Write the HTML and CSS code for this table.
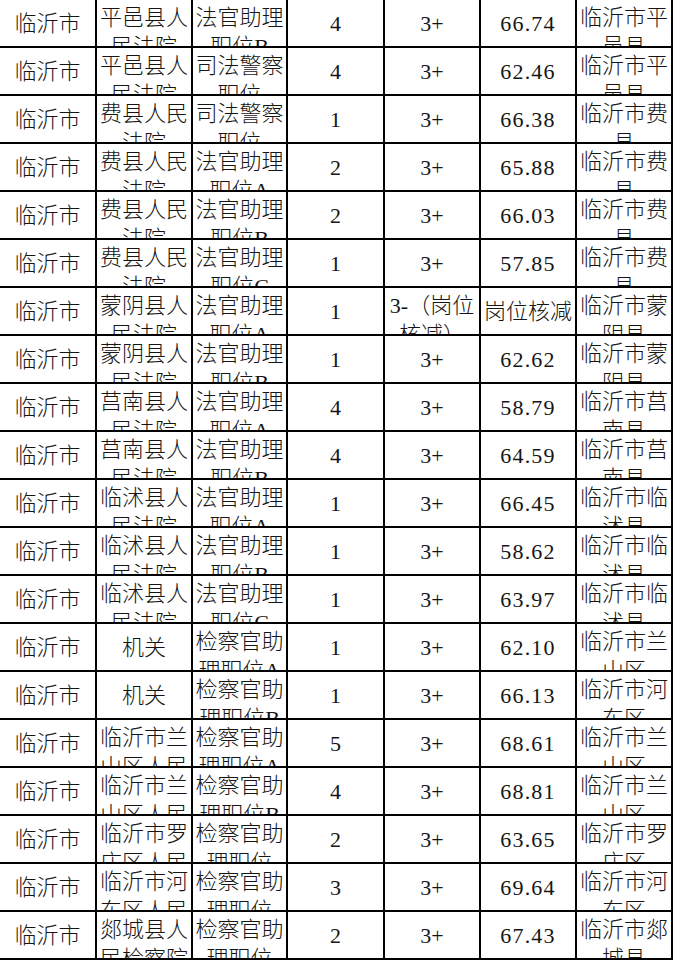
FILE: index.html
```html
<!DOCTYPE html>
<html lang="zh-CN">
<head>
<meta charset="utf-8">
<title>临沂市</title>
<link rel="stylesheet" href="styles.css">
</head>
<body>
<table class="sheet">
<colgroup>
<col class="w1"><col class="w2"><col class="w3"><col class="w4"><col class="w5"><col class="w6"><col class="w7">
</colgroup>
<tbody id="rows">
<tr><td><div class="c">临沂市</div></td><td><div class="t">平邑县人民法院</div></td><td><div class="t">法官助理职位B</div></td><td><div class="c num">4</div></td><td><div class="c num">3+</div></td><td><div class="c num score">66.74</div></td><td><div class="t">临沂市平邑县</div></td></tr>
<tr><td><div class="c">临沂市</div></td><td><div class="t">平邑县人民法院</div></td><td><div class="t">司法警察职位</div></td><td><div class="c num">4</div></td><td><div class="c num">3+</div></td><td><div class="c num score">62.46</div></td><td><div class="t">临沂市平邑县</div></td></tr>
<tr><td><div class="c">临沂市</div></td><td><div class="t">费县人民法院</div></td><td><div class="t">司法警察职位</div></td><td><div class="c num">1</div></td><td><div class="c num">3+</div></td><td><div class="c num score">66.38</div></td><td><div class="t">临沂市费县</div></td></tr>
<tr><td><div class="c">临沂市</div></td><td><div class="t">费县人民法院</div></td><td><div class="t">法官助理职位A</div></td><td><div class="c num">2</div></td><td><div class="c num">3+</div></td><td><div class="c num score">65.88</div></td><td><div class="t">临沂市费县</div></td></tr>
<tr><td><div class="c">临沂市</div></td><td><div class="t">费县人民法院</div></td><td><div class="t">法官助理职位B</div></td><td><div class="c num">2</div></td><td><div class="c num">3+</div></td><td><div class="c num score">66.03</div></td><td><div class="t">临沂市费县</div></td></tr>
<tr><td><div class="c">临沂市</div></td><td><div class="t">费县人民法院</div></td><td><div class="t">法官助理职位C</div></td><td><div class="c num">1</div></td><td><div class="c num">3+</div></td><td><div class="c num score">57.85</div></td><td><div class="t">临沂市费县</div></td></tr>
<tr><td><div class="c">临沂市</div></td><td><div class="t">蒙阴县人民法院</div></td><td><div class="t">法官助理职位A</div></td><td><div class="c num">1</div></td><td><div class="t">3-（岗位核减）</div></td><td><div class="c">岗位核减</div></td><td><div class="t">临沂市蒙阴县</div></td></tr>
<tr><td><div class="c">临沂市</div></td><td><div class="t">蒙阴县人民法院</div></td><td><div class="t">法官助理职位B</div></td><td><div class="c num">1</div></td><td><div class="c num">3+</div></td><td><div class="c num score">62.62</div></td><td><div class="t">临沂市蒙阴县</div></td></tr>
<tr><td><div class="c">临沂市</div></td><td><div class="t">莒南县人民法院</div></td><td><div class="t">法官助理职位A</div></td><td><div class="c num">4</div></td><td><div class="c num">3+</div></td><td><div class="c num score">58.79</div></td><td><div class="t">临沂市莒南县</div></td></tr>
<tr><td><div class="c">临沂市</div></td><td><div class="t">莒南县人民法院</div></td><td><div class="t">法官助理职位B</div></td><td><div class="c num">4</div></td><td><div class="c num">3+</div></td><td><div class="c num score">64.59</div></td><td><div class="t">临沂市莒南县</div></td></tr>
<tr><td><div class="c">临沂市</div></td><td><div class="t">临沭县人民法院</div></td><td><div class="t">法官助理职位A</div></td><td><div class="c num">1</div></td><td><div class="c num">3+</div></td><td><div class="c num score">66.45</div></td><td><div class="t">临沂市临沭县</div></td></tr>
<tr><td><div class="c">临沂市</div></td><td><div class="t">临沭县人民法院</div></td><td><div class="t">法官助理职位B</div></td><td><div class="c num">1</div></td><td><div class="c num">3+</div></td><td><div class="c num score">58.62</div></td><td><div class="t">临沂市临沭县</div></td></tr>
<tr><td><div class="c">临沂市</div></td><td><div class="t">临沭县人民法院</div></td><td><div class="t">法官助理职位C</div></td><td><div class="c num">1</div></td><td><div class="c num">3+</div></td><td><div class="c num score">63.97</div></td><td><div class="t">临沂市临沭县</div></td></tr>
<tr><td><div class="c">临沂市</div></td><td><div class="c">机关</div></td><td><div class="t">检察官助理职位A</div></td><td><div class="c num">1</div></td><td><div class="c num">3+</div></td><td><div class="c num score">62.10</div></td><td><div class="t">临沂市兰山区</div></td></tr>
<tr><td><div class="c">临沂市</div></td><td><div class="c">机关</div></td><td><div class="t">检察官助理职位B</div></td><td><div class="c num">1</div></td><td><div class="c num">3+</div></td><td><div class="c num score">66.13</div></td><td><div class="t">临沂市河东区</div></td></tr>
<tr><td><div class="c">临沂市</div></td><td><div class="t">临沂市兰山区人民检察院</div></td><td><div class="t">检察官助理职位A</div></td><td><div class="c num">5</div></td><td><div class="c num">3+</div></td><td><div class="c num score">68.61</div></td><td><div class="t">临沂市兰山区</div></td></tr>
<tr><td><div class="c">临沂市</div></td><td><div class="t">临沂市兰山区人民检察院</div></td><td><div class="t">检察官助理职位B</div></td><td><div class="c num">4</div></td><td><div class="c num">3+</div></td><td><div class="c num score">68.81</div></td><td><div class="t">临沂市兰山区</div></td></tr>
<tr><td><div class="c">临沂市</div></td><td><div class="t">临沂市罗庄区人民检察院</div></td><td><div class="t">检察官助理职位</div></td><td><div class="c num">2</div></td><td><div class="c num">3+</div></td><td><div class="c num score">63.65</div></td><td><div class="t">临沂市罗庄区</div></td></tr>
<tr><td><div class="c">临沂市</div></td><td><div class="t">临沂市河东区人民检察院</div></td><td><div class="t">检察官助理职位</div></td><td><div class="c num">3</div></td><td><div class="c num">3+</div></td><td><div class="c num score">69.64</div></td><td><div class="t">临沂市河东区</div></td></tr>
<tr><td><div class="c">临沂市</div></td><td><div class="t">郯城县人民检察院</div></td><td><div class="t">检察官助理职位</div></td><td><div class="c num">2</div></td><td><div class="c num">3+</div></td><td><div class="c num score">67.43</div></td><td><div class="t">临沂市郯城县</div></td></tr>
</tbody>
</table>
</body>
</html>
```
FILE: styles.css
```css
html, body {
  margin: 0;
  padding: 0;
  background: #ffffff;
}

body {
  font-family: "Liberation Serif", "Noto Sans CJK SC", serif;
  font-size: 22px;
  font-weight: 300;
  color: #151515;
}

.sheet {
  border-collapse: separate;
  border-spacing: 0;
  table-layout: fixed;
  width: 673px;
}

.w1 { width: 97px; }
.w2 { width: 96px; }
.w3 { width: 95px; }
.w4 { width: 97px; }
.w5 { width: 96px; }
.w6 { width: 96px; }
.w7 { width: 96px; }

.sheet td {
  padding: 0;
  border-right: 2px solid #000;
  border-bottom: 2px solid #000;
  vertical-align: top;
}

.c, .t {
  height: 46px;
  overflow: hidden;
  text-align: center;
  line-height: 29px;
  padding: 0 2px;
  box-sizing: border-box;
}

.c {
  display: flex;
  align-items: center;
  justify-content: center;
}

.t {
  padding-top: 3px;
  word-break: break-all;
}

.score {
  letter-spacing: 1.2px;
}
```
